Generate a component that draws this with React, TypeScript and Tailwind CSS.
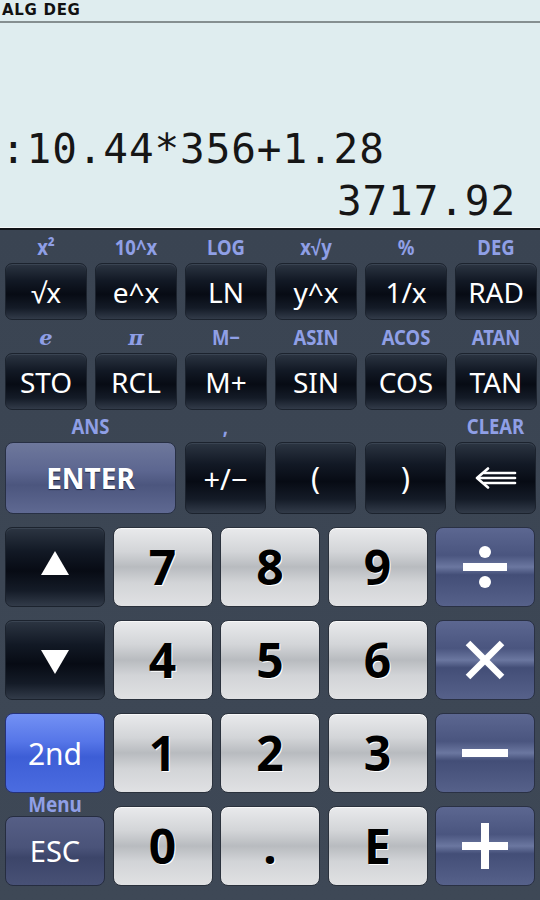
import React from "react";

const sans = { fontFamily: '"Noto Sans", "Open Sans", "DejaVu Sans", sans-serif' };

const darkBg =
  "bg-[linear-gradient(180deg,#2c3542_0%,#121925_30%,#070b14_55%,#141b27_80%,#323b49_100%)]";
const numBg =
  "bg-[linear-gradient(180deg,#e9eaec_0%,#d3d5d8_30%,#b8bbbf_50%,#d2d4d7_70%,#e0e1e3_100%)]";
const opBg =
  "bg-[linear-gradient(180deg,#5c6791_0%,#4a557f_35%,#6b77a0_50%,#434e77_60%,#56618a_100%)]";

function Label({ children, italic }: { children: React.ReactNode; italic?: boolean }) {
  return (
    <div
      className={`h-full flex items-center justify-center text-[#8f9fe6] text-[21px] leading-none font-bold ${italic ? "italic" : ""}`}
      style={italic ? { fontFamily: '"DejaVu Serif", "Liberation Serif", serif' } : { fontFamily: '"Noto Sans", sans-serif', transform: "scaleX(0.88)" }}
    >
      {children}
    </div>
  );
}

function DarkKey({ children, className = "" }: { children: React.ReactNode; className?: string }) {
  return (
    <div
      className={`${darkBg} rounded-[7px] border border-[#1c232e] shadow-[inset_0_1px_0_#3a4452] flex items-center justify-center text-white text-[28px] leading-none ${className}`}
      style={sans}
    >
      {children}
    </div>
  );
}

function NumKey({ children }: { children: React.ReactNode }) {
  return (
    <div
      className={`${numBg} rounded-[8px] border border-[#2a313c] shadow-[inset_0_1px_0_#f8f8f8] flex items-center justify-center text-black text-[48px] font-bold leading-none h-[80px]`}
      style={{ ...sans, textShadow: "1px 1px 0 #ffffff" }}
    >
      {children}
    </div>
  );
}

function OpKey({ children }: { children: React.ReactNode }) {
  return (
    <div className={`${opBg} rounded-[8px] border border-[#2a3144] flex items-center justify-center h-[80px]`}>
      {children}
    </div>
  );
}

const topRows: { label: string; italic?: boolean; key: string }[][] = [
  [
    { label: "x²", key: "√x" },
    { label: "10^x", key: "e^x" },
    { label: "LOG", key: "LN" },
    { label: "x√y", key: "y^x" },
    { label: "%", key: "1/x" },
    { label: "DEG", key: "RAD" },
  ],
  [
    { label: "e", italic: true, key: "STO" },
    { label: "π", italic: true, key: "RCL" },
    { label: "M−", key: "M+" },
    { label: "ASIN", key: "SIN" },
    { label: "ACOS", key: "COS" },
    { label: "ATAN", key: "TAN" },
  ],
];

export default function App() {
  return (
    <div className="w-[540px] h-[900px] overflow-hidden bg-[#3c4654] flex flex-col">
      {/* Display */}
      <div className="h-[227px] bg-[#dfedef] flex flex-col shrink-0">
        <div
          className="h-[21px] pl-[2px] text-[15px] font-bold text-[#111] leading-[20px] tracking-[0.7px]"
          style={{ fontFamily: '"DejaVu Sans", sans-serif' }}
        >
          ALG DEG
        </div>
        <div className="h-[2px] bg-[#858f90]" />
        <div
          className="flex-1 flex flex-col justify-end pb-[0px] text-[#161616] text-[41px] leading-[52px]"
          style={{ fontFamily: '"DejaVu Sans Mono", "Liberation Mono", monospace' }}
        >
          <div className="pl-[1px] tracking-[0.9px]">:10.44*356+1.28</div>
          <div className="text-right pr-[24px] tracking-[0.9px]">3717.92</div>
        </div>
      </div>
      <div className="h-[1px] bg-[#f4f8f8]" />
      <div className="h-[2px] bg-[#111418]" />

      {/* Keypad */}
      <div className="flex-1 pl-[5px] pr-[3px] bg-[linear-gradient(180deg,#3a4452_0%,#3e4856_100%)]">
        {topRows.map((row, i) => (
          <div key={i}>
            <div className="grid grid-cols-[repeat(6,82px)] gap-x-[8px] h-[33px] pt-[2px]">
              {row.map((c) => (
                <Label key={c.key} italic={c.italic}>
                  {c.label}
                </Label>
              ))}
            </div>
            <div className="grid grid-cols-[repeat(6,82px)] gap-x-[8px] h-[57px]">
              {row.map((c) => (
                <DarkKey key={c.key}>{c.key}</DarkKey>
              ))}
            </div>
          </div>
        ))}

        {/* ENTER row */}
        <div className="grid grid-cols-[171px_repeat(4,81px)] gap-x-[9px] h-[32px]">
          <Label>ANS</Label>
          <Label>,</Label>
          <div />
          <div />
          <Label>CLEAR</Label>
        </div>
        <div className="grid grid-cols-[171px_repeat(4,81px)] gap-x-[9px] h-[72px]">
          <div
            className="rounded-[8px] border border-[#283044] bg-[linear-gradient(180deg,#6e789c_0%,#5c6690_40%,#4c567e_60%,#5f6992_100%)] flex items-center justify-center text-white text-[28px] font-bold"
            style={{ ...sans, textShadow: "0 1px 1px #202840" }}
          >
            ENTER
          </div>
          <DarkKey className="text-[29px]">+/−</DarkKey>
          <DarkKey className="text-[30px]">(</DarkKey>
          <DarkKey className="text-[30px]">)</DarkKey>
          <DarkKey>
            <svg width="42" height="22" viewBox="0 0 42 22" fill="none" stroke="white" strokeWidth="2.6" strokeLinecap="round" strokeLinejoin="round">
              <polyline points="13,1.5 2,11 13,20.5" />
              <line x1="9" y1="6" x2="40" y2="6" />
              <line x1="4" y1="11" x2="40" y2="11" />
              <line x1="9" y1="16" x2="40" y2="16" />
            </svg>
          </DarkKey>
        </div>

        {/* Number grid */}
        <div className="grid grid-cols-[repeat(5,100px)] gap-x-[7.5px] gap-y-[13px] mt-[13px]">
          <DarkKey className="h-[80px]">
            <svg width="30" height="28" viewBox="0 0 30 28" className="mb-[8px]">
              <polygon points="15,2 29,26 1,26" fill="white" />
            </svg>
          </DarkKey>
          <NumKey>7</NumKey>
          <NumKey>8</NumKey>
          <NumKey>9</NumKey>
          <OpKey>
            <svg width="46" height="44" viewBox="0 0 46 44" fill="white">
              <circle cx="23" cy="7" r="6" />
              <rect x="1" y="18" width="44" height="8" />
              <circle cx="23" cy="37" r="6" />
            </svg>
          </OpKey>

          <DarkKey className="h-[80px]">
            <svg width="30" height="28" viewBox="0 0 30 28" className="mt-[4px]">
              <polygon points="1,2 29,2 15,26" fill="white" />
            </svg>
          </DarkKey>
          <NumKey>4</NumKey>
          <NumKey>5</NumKey>
          <NumKey>6</NumKey>
          <OpKey>
            <svg width="42" height="42" viewBox="0 0 42 42" stroke="white" strokeWidth="6.5" strokeLinecap="butt">
              <line x1="4" y1="4" x2="38" y2="38" />
              <line x1="38" y1="4" x2="4" y2="38" />
            </svg>
          </OpKey>

          <div
            className="h-[80px] rounded-[8px] border border-[#26327a] bg-[linear-gradient(180deg,#7391f4_0%,#5676e8_35%,#3d5ed6_55%,#4b6ce0_100%)] flex items-center justify-center text-white text-[30px]"
            style={sans}
          >
            2nd
          </div>
          <NumKey>1</NumKey>
          <NumKey>2</NumKey>
          <NumKey>3</NumKey>
          <OpKey>
            <svg width="46" height="10" viewBox="0 0 46 10" fill="white">
              <rect x="0" y="1" width="46" height="8" />
            </svg>
          </OpKey>

          <div className="h-[80px] flex flex-col">
            <div className="h-[10px] relative">
              <div
                className="absolute left-0 right-0 top-[-12px] text-center text-[#8f9fe6] text-[21px] font-bold leading-none"
                style={{ fontFamily: '"Noto Sans", sans-serif', transform: "scaleX(0.9)" }}
              >
                Menu
              </div>
            </div>
            <div
              className="flex-1 rounded-[8px] border border-[#262d40] bg-[linear-gradient(180deg,#565f86_0%,#4a5379_45%,#3c4569_60%,#485176_100%)] flex items-center justify-center text-white text-[29px]"
              style={sans}
            >
              ESC
            </div>
          </div>
          <NumKey>0</NumKey>
          <NumKey>.</NumKey>
          <NumKey>E</NumKey>
          <OpKey>
            <svg width="46" height="46" viewBox="0 0 46 46" fill="white">
              <rect x="0" y="19" width="46" height="8" />
              <rect x="19" y="0" width="8" height="46" />
            </svg>
          </OpKey>
        </div>
      </div>
    </div>
  );
}
